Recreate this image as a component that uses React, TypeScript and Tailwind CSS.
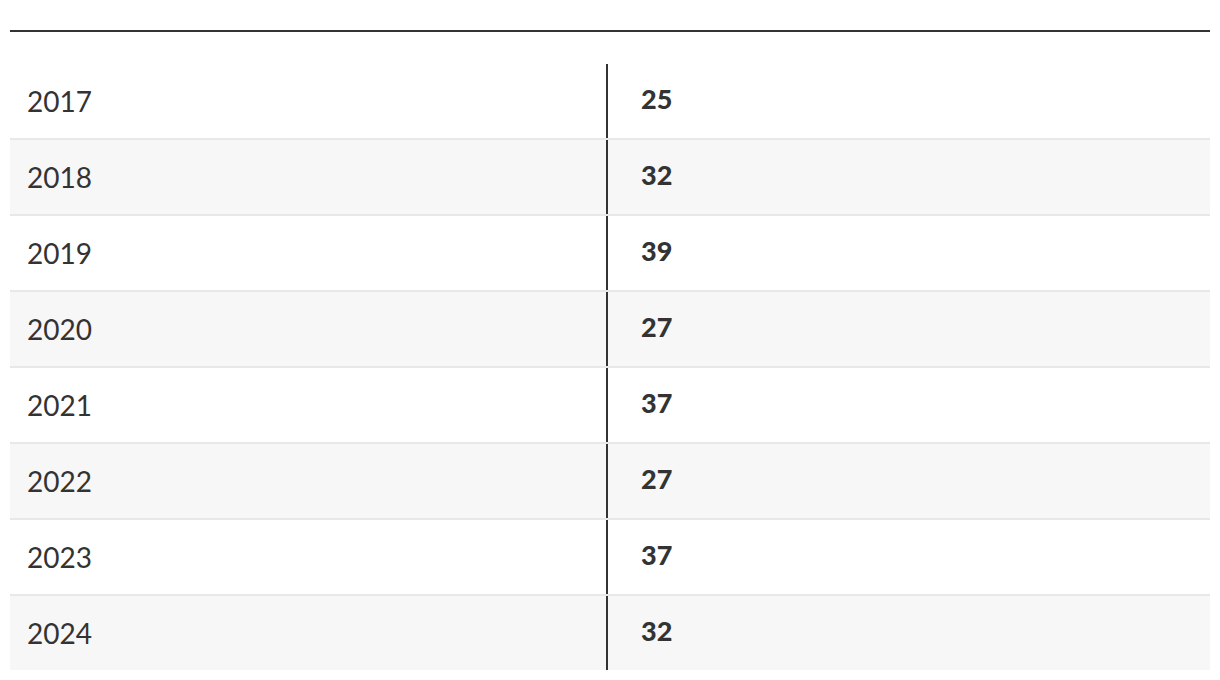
const ROWS = [
  { year: '2017', value: 25 },
  { year: '2018', value: 32 },
  { year: '2019', value: 39 },
  { year: '2020', value: 27 },
  { year: '2021', value: 37 },
  { year: '2022', value: 27 },
  { year: '2023', value: 37 },
  { year: '2024', value: 32 },
]

export default function App() {
  return (
    <div className="bg-white min-h-[680px] px-[10px] pt-[30px] text-[#333] font-['Lato','Liberation_Sans',sans-serif]">
      <div className="h-[2px] bg-[#333]" />
      <div className="mt-[32px] flex flex-col">
        {ROWS.map((r, i) => (
          <div
            key={r.year}
            className={`flex ${i < ROWS.length - 1 ? 'h-[76px] border-b-2 border-[#e8e8e8]' : 'h-[74px]'} ${i % 2 === 1 ? 'bg-[#f7f7f7]' : 'bg-white'}`}
          >
            <div className="w-[598px] shrink-0 flex items-center pl-[17px] border-r-2 border-[#333] text-[28px]">
              {r.year}
            </div>
            <div className="flex-1 flex items-center pl-[33px] pb-[3px] text-[27px] font-black">
              {r.value}
            </div>
          </div>
        ))}
      </div>
    </div>
  )
}
